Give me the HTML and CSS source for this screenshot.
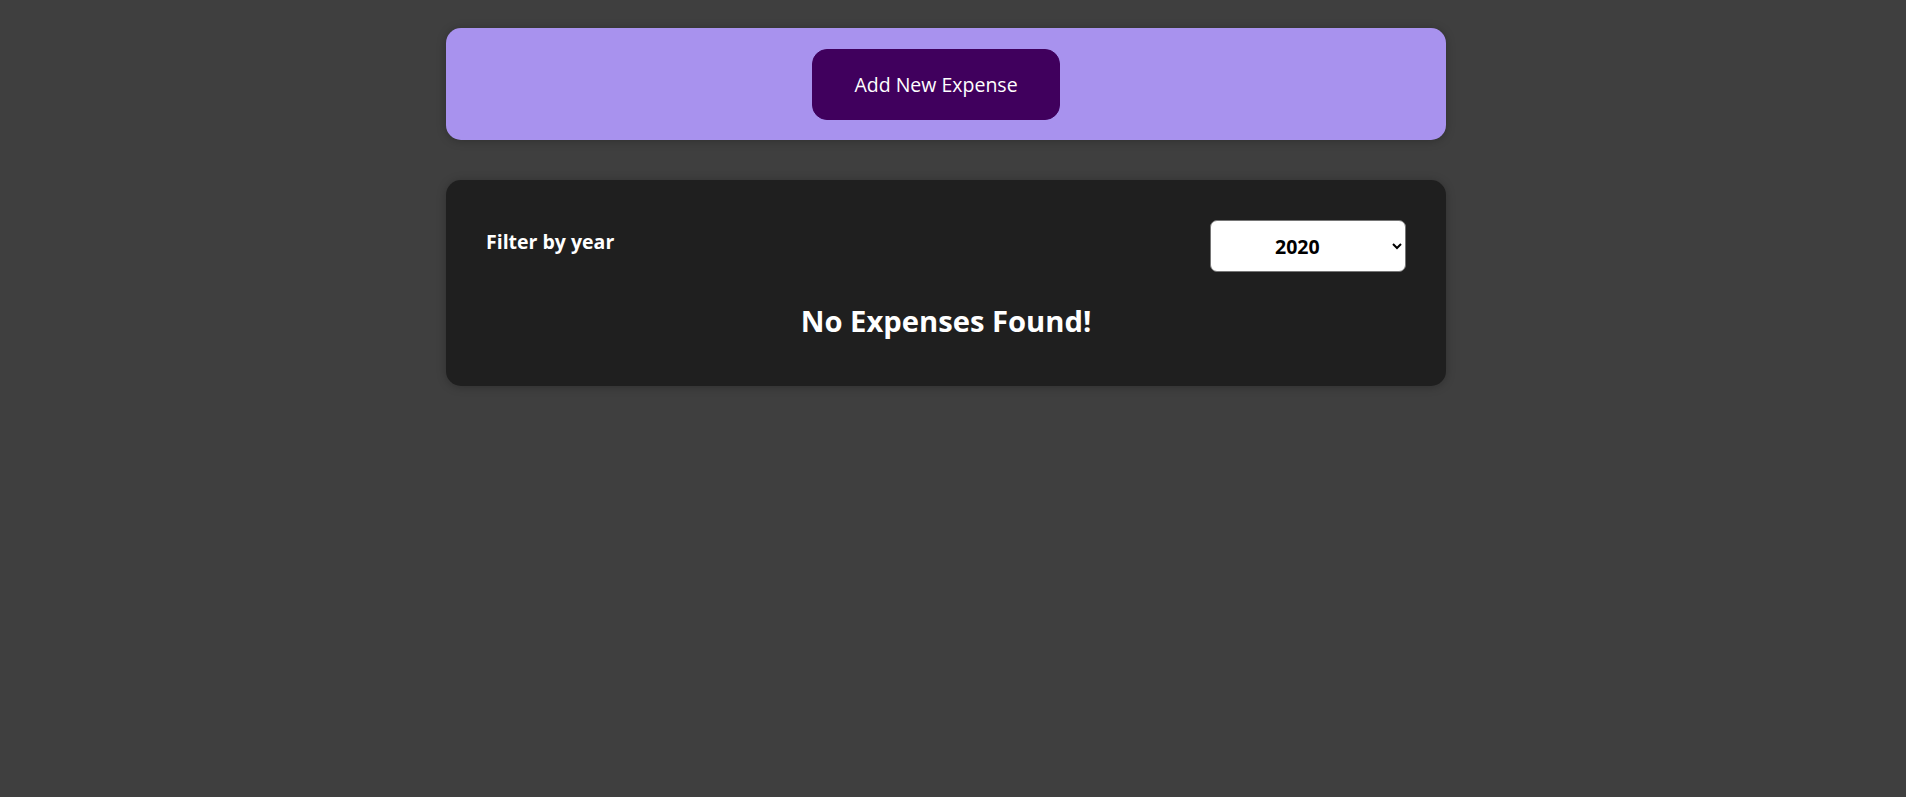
FILE: index.html
```html
<!DOCTYPE html>
<html lang="en">
<head>
<meta charset="utf-8">
<title>Expenses</title>
<link rel="stylesheet" href="styles.css">
</head>
<body>
<div class="app">
  <div class="new-expense">
    <button class="new-expense__button" type="button">Add New Expense</button>
  </div>
  <div class="expenses">
    <div class="expenses-filter">
      <div class="expenses-filter__control">
        <label class="expenses-filter__label" for="year">Filter by year</label>
        <select class="expenses-filter__select" id="year">
          <option>2022</option>
          <option>2021</option>
          <option selected>2020</option>
          <option>2019</option>
        </select>
      </div>
    </div>
    <h2 class="expenses-list__fallback">No Expenses Found!</h2>
  </div>
</div>
</body>
</html>
```
FILE: styles.css
```css
* { box-sizing: border-box; }

html { font-family: "Open Sans", "Noto Sans", sans-serif; font-size: 19.5px; }

body {
  margin: 0;
  background-color: #3f3f3f;
  min-height: 797px;
}

.app {
  padding: 28px 14px 0 0;
}

.new-expense {
  background-color: #a892ee;
  padding: 21px 20px 20px;
  margin: 0 auto 40px;
  width: 1000px;
  border-radius: 15px;
  text-align: center;
  box-shadow: 0 1px 10px rgba(0, 0, 0, 0.25);
}

.new-expense__button {
  font: inherit;
  line-height: 29px;
  cursor: pointer;
  padding: 20px 41px;
  border: 1px solid #40005d;
  background-color: #40005d;
  color: #ffffff;
  border-radius: 15px;
  margin-right: 20px;
}

.expenses {
  padding: 20px;
  background-color: #1f1f1f;
  margin: 0 auto;
  width: 1000px;
  border-radius: 15px;
  box-shadow: 0 1px 10px rgba(0, 0, 0, 0.25);
}

.expenses-filter {
  color: #ffffff;
  padding: 0 20px;
}

.expenses-filter__control {
  display: flex;
  width: 100%;
  align-items: center;
  justify-content: space-between;
  margin: 20px 0;
}

.expenses-filter__label {
  font-weight: 700;
  margin-bottom: 10px;
}

.expenses-filter__select {
  font: inherit;
  font-weight: 700;
  width: 196px;
  height: 52px;
  padding: 10px 12px 10px 60px;
  border-radius: 7px;
  border: 1px solid #767676;
  background-color: #ffffff;
  color: #000000;
}

.expenses-list__fallback {
  color: #ffffff;
  text-align: center;
  font-size: 29.2px;
  line-height: 40px;
  font-weight: 700;
  margin: 29px 0 25px;
}
```
